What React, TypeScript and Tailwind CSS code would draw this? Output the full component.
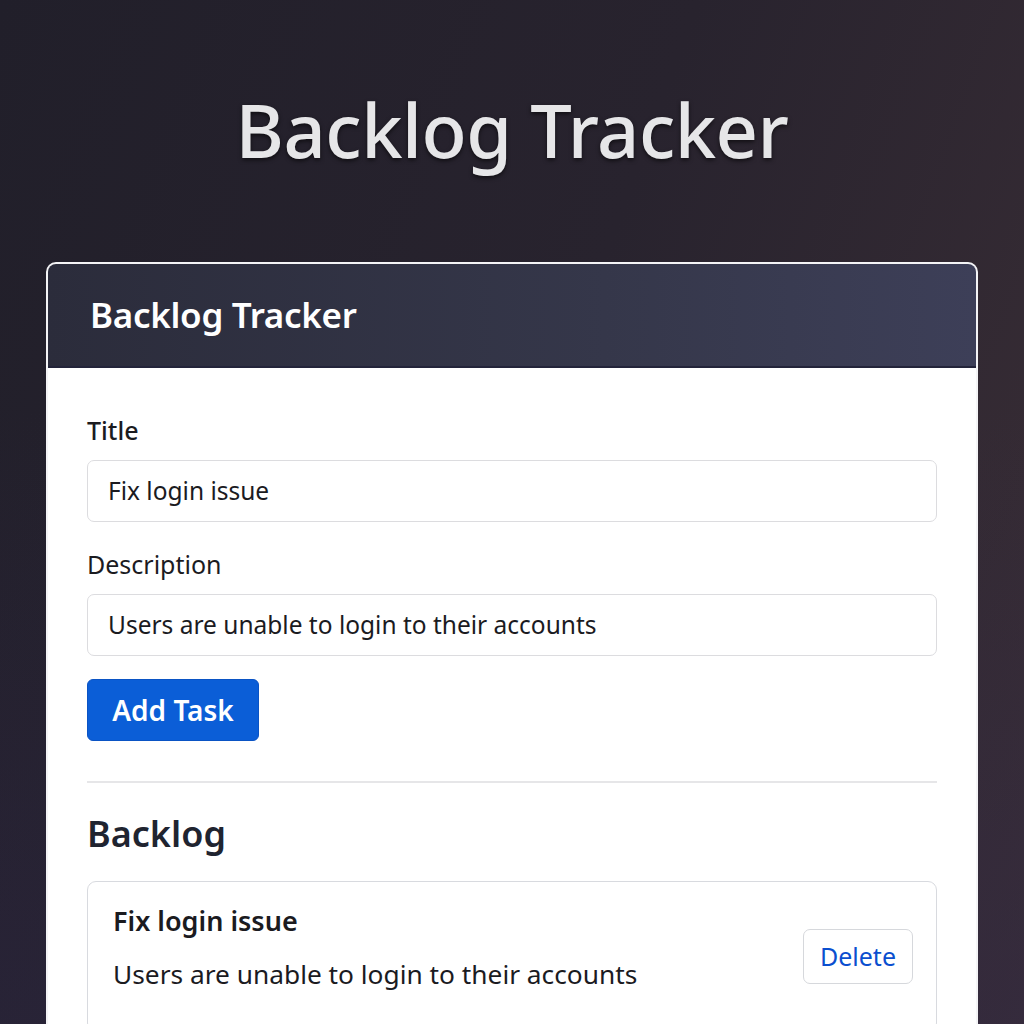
import React from 'react';

const font = { fontFamily: '"Noto Sans", "Open Sans", sans-serif' };

const App: React.FC = () => {
  return (
    <div
      className="min-h-screen w-full bg-[linear-gradient(110deg,#211f2a_0%,#28232e_50%,#3a2e36_100%)] overflow-hidden"
      style={font}
    >
      <div className="h-[1024px] bg-[linear-gradient(180deg,transparent_40%,rgba(45,38,70,0.4)_100%)]">
        <h1 className="pt-[80px] text-center text-[74px] leading-[100px] font-medium text-[#e6e6e8] tracking-[-0.5px] [text-shadow:0_2px_4px_rgba(0,0,0,0.6)]">
          Backlog Tracker
        </h1>

        <div className="mx-[46px] mt-[82px] rounded-[10px] border-2 border-[#f4f4f6] bg-white overflow-hidden">
          <div className="h-[104px] flex items-center px-[42px] bg-[linear-gradient(90deg,#2b2c3b_0%,#35374a_60%,#3d3f58_100%)] border-b-2 border-[#23243a]">
            <h2 className="text-[35px] font-semibold text-white tracking-[-0.3px]">Backlog Tracker</h2>
          </div>

          <div className="px-[39px] pt-[47px]">
            <label className="block text-[25px] leading-[30px] font-medium text-[#1b1b1f] mb-[15px]">Title</label>
            <div className="h-[62px] rounded-[7px] border border-[#dcdcdf] flex items-center px-[20px] text-[24.5px] text-[#1b1b1f]">
              Fix login issue
            </div>

            <label className="block text-[25px] leading-[30px] text-[#1b1b1f] mt-[27px] mb-[15px]">Description</label>
            <div className="h-[62px] rounded-[7px] border border-[#dcdcdf] flex items-center px-[20px] text-[24.5px] text-[#1b1b1f]">
              Users are unable to login to their accounts
            </div>

            <button className="mt-[23px] h-[62px] w-[172px] rounded-[6px] bg-[#0b5ed7] border border-[#0a53c4] text-white text-[28px] font-semibold">
              Add Task
            </button>

            <div className="mt-[40px] border-t-2 border-[#e6e6e8]" />

            <h3 className="mt-[29px] text-[36px] leading-[44px] font-semibold text-[#1f2430]">Backlog</h3>

            <div className="mt-[25px] rounded-[9px] border border-[#d8dadf] pl-[25px] pr-[23px] pt-[22px] pb-[40px] flex items-start justify-between">
              <div>
                <div className="text-[27px] leading-[34px] font-semibold text-[#1b1b1f]">Fix login issue</div>
                <div className="mt-[19px] text-[26.3px] leading-[34px] text-[#1b1b1f]">
                  Users are unable to login to their accounts
                </div>
              </div>
              <button className="mt-[25px] h-[55px] px-[16px] rounded-[7px] border border-[#d6d8dc] text-[25px] text-[#0b4fcf] bg-white">
                Delete
              </button>
            </div>
          </div>
        </div>
      </div>
    </div>
  );
};

export default App;
